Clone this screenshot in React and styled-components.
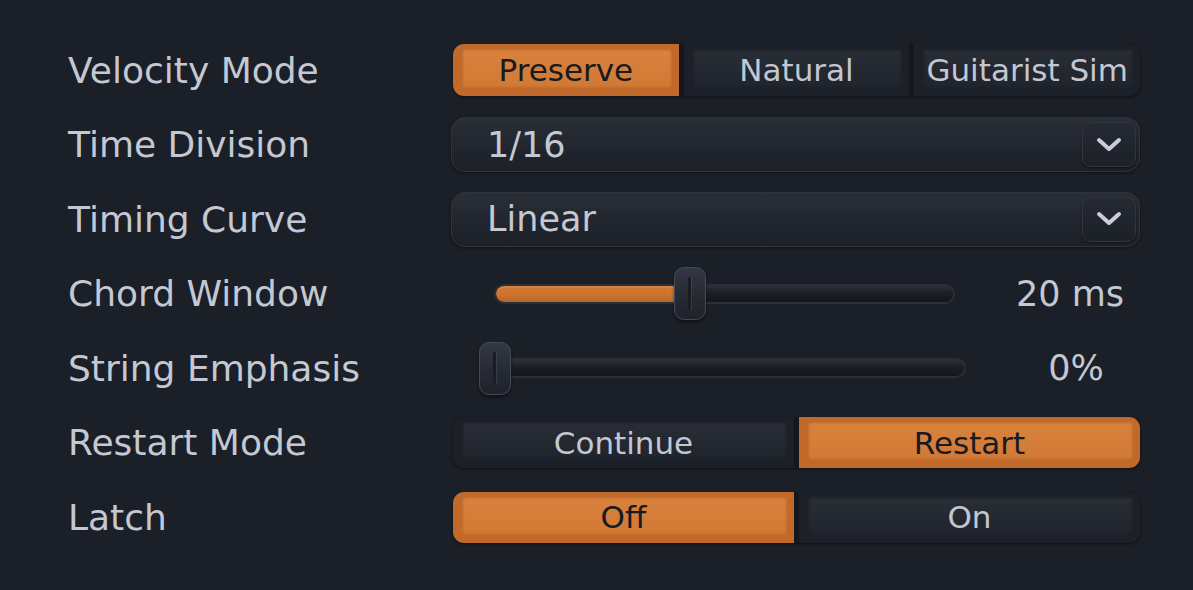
import React from "react";
import styled, { createGlobalStyle } from "styled-components";

const Global = createGlobalStyle`
  html, body { margin: 0; padding: 0; background: #1b1f27; }
  body { font-family: "DejaVu Sans", "Liberation Sans", sans-serif; }
  * { box-sizing: border-box; }
`;

const Page = styled.div`
  width: 1193px;
  height: 590px;
  background: #1b1f27;
  padding: 33px 0 0 68px;
  overflow: hidden;
`;

const Grid = styled.div`
  display: grid;
  grid-template-columns: 385px 687px;
  grid-auto-rows: 74.5px;
  align-items: center;
`;

const Label = styled.div`
  font-size: 36px;
  color: #c3c8d2;
  white-space: nowrap;
`;

const Segmented = styled.div`
  display: flex;
  gap: 5px;
  height: ${(p) => p.$h || 52}px;
  background: #14171d;
  border-radius: 11px;
  overflow: hidden;
  box-shadow: 0 1px 3px rgba(0, 0, 0, 0.5);
`;

const Segment = styled.div`
  position: relative;
  flex: 1;
  display: flex;
  align-items: center;
  justify-content: center;
  font-size: 31px;
  color: ${(p) => (p.$active ? "#171a20" : "#c2c7d1")};
  background: ${(p) => (p.$active ? "#c1692a" : "#1c2028")};
  white-space: nowrap;
  &::before {
    content: "";
    position: absolute;
    top: 6px;
    bottom: 9px;
    left: 10px;
    right: 8px;
    border-radius: 3px;
    background: ${(p) =>
      p.$active
        ? "linear-gradient(#d9823d, #d17a35)"
        : "linear-gradient(#292d36, #20242c)"};
    filter: blur(1px);
  }
  & > span {
    position: relative;
  }
`;

const Dropdown = styled.div`
  position: relative;
  margin-left: -2px;
  width: 689px;
  height: 55px;
  border-radius: 14px;
  background: linear-gradient(#2a2e37, #1f232b 70%, #1c2028);
  border: 1.5px solid #2f333c;
  box-shadow: 0 1px 3px rgba(0, 0, 0, 0.45);
  display: flex;
  align-items: center;
  justify-content: space-between;
  padding: 0 3px 0 35px;
`;

const DropText = styled.span`
  font-size: 35px;
  color: #c3c8d2;
`;

const ChevronBtn = styled.div`
  width: 54px;
  height: 45px;
  border-radius: 9px;
  background: linear-gradient(#262a33, #1c2027);
  border: 1.5px solid #30353f;
  box-shadow: 0 1px 2px rgba(0, 0, 0, 0.5);
  display: flex;
  align-items: center;
  justify-content: center;
`;

const SliderRow = styled.div`
  display: grid;
  grid-template-columns: 547px 140px;
  align-items: center;
`;

const SliderArea = styled.div`
  position: relative;
  margin-left: ${(p) => p.$ml}px;
  width: ${(p) => p.$w}px;
  height: 53px;
  display: flex;
  align-items: center;
`;

const Track = styled.div`
  position: relative;
  width: 100%;
  height: 20px;
  border-radius: 10px;
  background: linear-gradient(#2c3039, #1b1e25 45%, #13161b);
  border: 2px solid #2b2f38;
  overflow: hidden;
`;

const Fill = styled.div`
  height: 100%;
  border-radius: 8px;
  background: linear-gradient(#d37a36, #cb722f 60%, #b9652a);
  box-shadow: inset 0 2px 0 rgba(230, 150, 90, 0.35);
`;

const Thumb = styled.div`
  position: absolute;
  top: 0;
  width: 32px;
  height: 53px;
  border-radius: 10px;
  background: linear-gradient(#333844, #252932 60%, #1f232b);
  border: 1.5px solid #444a57;
  box-shadow: 0 2px 3px rgba(0, 0, 0, 0.5);
  &::after {
    content: "";
    position: absolute;
    left: 13px;
    top: 9px;
    bottom: 9px;
    width: 3px;
    border-radius: 1px;
    background: #1a1d23;
    box-shadow: 1px 0 0 rgba(90, 97, 110, 0.35);
  }
`;

const Value = styled.div`
  font-size: 35px;
  color: #c3c8d2;
  text-align: center;
  white-space: nowrap;
  padding-left: ${(p) => p.$pl || 0}px;
`;

function Chevron() {
  return (
    <svg width="26" height="16" viewBox="0 0 26 16">
      <polyline
        points="3,3 13,12 23,3"
        fill="none"
        stroke="#c9ceda"
        strokeWidth="4"
        strokeLinecap="round"
        strokeLinejoin="round"
      />
    </svg>
  );
}

function Seg({ options, active, h }) {
  return (
    <Segmented $h={h}>
      {options.map((o) => (
        <Segment key={o} $active={o === active}>
          <span>{o}</span>
        </Segment>
      ))}
    </Segmented>
  );
}

function Select({ value }) {
  return (
    <Dropdown>
      <DropText>{value}</DropText>
      <ChevronBtn>
        <Chevron />
      </ChevronBtn>
    </Dropdown>
  );
}

function Slider({ frac, ml, w, value, vpl }) {
  const left = frac * (w - 32);
  return (
    <SliderRow>
      <SliderArea $ml={ml} $w={w}>
        <Track>
          <Fill style={{ width: frac > 0 ? left + 10 : 0 }} />
        </Track>
        <Thumb style={{ left }} />
      </SliderArea>
      <Value $pl={vpl}>{value}</Value>
    </SliderRow>
  );
}

export default function App() {
  return (
    <Page>
      <Global />
      <Grid>
        <Label>Velocity Mode</Label>
        <Seg options={["Preserve", "Natural", "Guitarist Sim"]} active="Preserve" h={52} />

        <Label>Time Division</Label>
        <Select value="1/16" />

        <Label>Timing Curve</Label>
        <Select value="Linear" />

        <Label>Chord Window</Label>
        <Slider frac={180 / 429} ml={41} w={461} value="20 ms" vpl={0} />

        <Label>String Emphasis</Label>
        <Slider frac={0} ml={26} w={487} value="0%" vpl={12} />

        <Label>Restart Mode</Label>
        <Seg options={["Continue", "Restart"]} active="Restart" h={51} />

        <Label>Latch</Label>
        <Seg options={["Off", "On"]} active="Off" h={51} />
      </Grid>
    </Page>
  );
}
